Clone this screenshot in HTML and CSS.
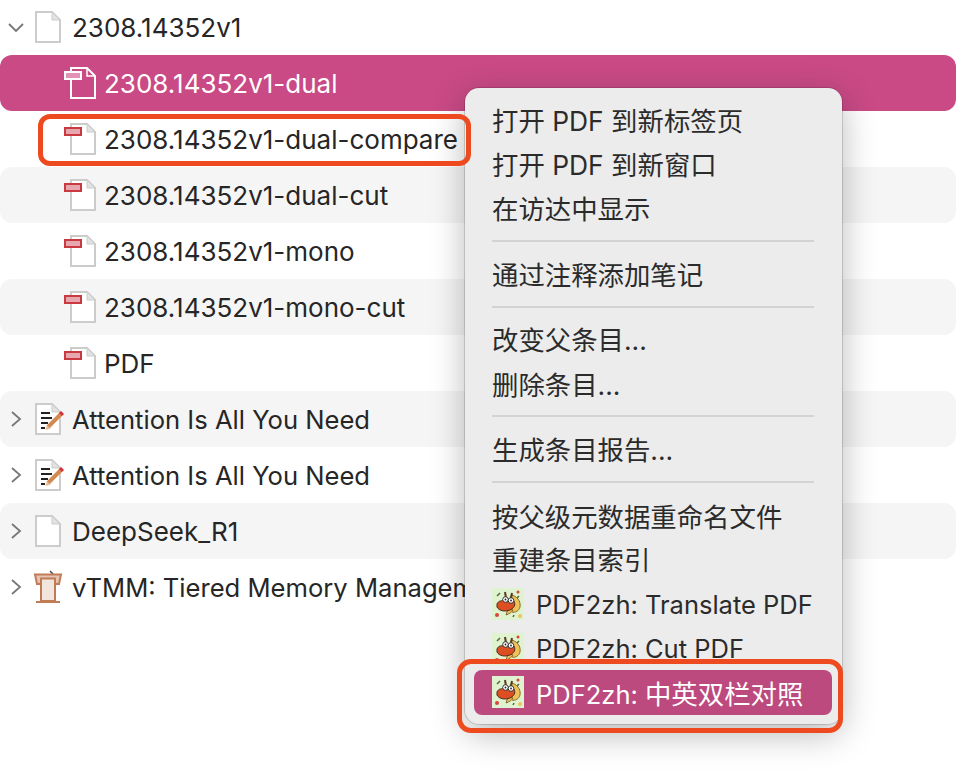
FILE: index.html
```html
<!DOCTYPE html>
<html lang="zh">
<head>
<meta charset="utf-8">
<title>Zotero</title>
<link rel="stylesheet" href="styles.css">
</head>
<body>
<svg class="defs" width="0" height="0">
  <symbol id="doc" viewBox="0 0 26 32">
    <path d="M1 1H17L25 9V31H1Z" fill="#fff" stroke="#ccc" stroke-width="2"/>
    <path d="M17 1V9H25Z" fill="#e2e2e2" stroke="#ccc" stroke-width="1"/>
  </symbol>
  <symbol id="pdf" viewBox="0 0 32 32">
    <path d="M7 1H23L31 9V31H7Z" fill="#fff" stroke="#ccc" stroke-width="2"/>
    <path d="M23 1V9H31Z" fill="#e2e2e2" stroke="#ccc" stroke-width="1"/>
    <rect x="1" y="5" width="16" height="7" fill="#e6a7ae" stroke="#c9393f" stroke-width="2"/>
  </symbol>
  <symbol id="pdf-sel" viewBox="0 0 32 32">
    <path d="M7 1H23L31 9V31H7Z" fill="none" stroke="#fff" stroke-width="2"/>
    <path d="M23 1V9H31" fill="none" stroke="#fff" stroke-width="1.5"/>
    <rect x="1" y="5" width="16" height="7" fill="#e393b8" stroke="#fff" stroke-width="2"/>
  </symbol>
  <symbol id="note" viewBox="0 0 26 32">
    <path d="M1 1H17L25 9V31H1Z" fill="#fff" stroke="#ccc" stroke-width="2"/>
    <path d="M17 1V9H25Z" fill="#e2e2e2" stroke="#ccc" stroke-width="1"/>
    <path d="M6 10H15M6 15H17M6 20H13M6 25H10" stroke="#222" stroke-width="2"/>
    <path d="M13 24L26 11" stroke="#d28a52" stroke-width="4"/>
    <path d="M10.500 27L12 22L15.500 25.500Z" fill="#e8b98f"/>
    <path d="M25 9L28 12" stroke="#d9303a" stroke-width="3"/>
  </symbol>
  <symbol id="podium" viewBox="0 0 26 32">
    <path d="M15 0L18 3" stroke="#444" stroke-width="1.500"/>
    <path d="M0 3.500H26L24 13H2Z" fill="#e4c3b2" stroke="#c17c56" stroke-width="2"/>
    <path d="M6 7.500H20V30H6Z" fill="#f2e5de" stroke="#c17c56" stroke-width="2"/>
    <path d="M1 31H25" stroke="#c17c56" stroke-width="2"/>
  </symbol>
  <symbol id="dragon" viewBox="0 0 32 32">
    <rect width="32" height="32" fill="#dff3d0"/>
    <path d="M19 7C25 8 29 13 28 19C27 23 23 25 20 24Z" fill="#eec25a" stroke="#8a6a2a"/>
    <path d="M14 27C17 26 20 24 21 22L16 21Z" fill="#eec25a" stroke="#8a6a2a"/>
    <path d="M13 4L14 10M20 5L19 10" stroke="#5a3a1a" stroke-width="2"/>
    <path d="M5 16C6 13 10 12 13 13L22 13C24 17 22 20 18 22C13 24 7 23 5 19Z" fill="#dc4f22" stroke="#4c2a1c"/>
    <circle cx="13.500" cy="11.500" r="2.800" fill="#fff" stroke="#333"/>
    <circle cx="19" cy="12.500" r="2.800" fill="#fff" stroke="#333"/>
    <circle cx="13.500" cy="11.500" r=".9" fill="#222"/>
    <circle cx="19" cy="12.500" r=".9" fill="#222"/>
    <circle cx="5" cy="27" r="2" fill="#d9443f"/>
    <circle cx="26" cy="4" r="1.500" fill="#d9443f"/>
    <circle cx="28" cy="28" r="2" fill="#eec25a"/>
    <path d="M5 8L8 5M25 10L27 8M21 29L22 27" stroke="#556b3a" stroke-width="1.500"/>
  </symbol>
  <symbol id="chev-r" viewBox="0 0 12 16">
    <path d="M2 1L10 8L2 15" fill="none" stroke="#777" stroke-width="1.800"/>
  </symbol>
  <symbol id="chev-d" viewBox="0 0 16 12">
    <path d="M1 2L8 9L15 2" fill="none" stroke="#777" stroke-width="1.800"/>
  </symbol>
</svg>

<main class="tree">
  <div class="row">
    <svg class="chev-d"><use href="#chev-d"/></svg>
    <svg class="icon"><use href="#doc"/></svg>
    <span class="label">2308.14352v1</span>
  </div>
  <div class="row child selected">
    <svg class="icon-pdf"><use href="#pdf-sel"/></svg>
    <span class="label">2308.14352v1-dual</span>
  </div>
  <div class="row child">
    <svg class="icon-pdf"><use href="#pdf"/></svg>
    <span class="label">2308.14352v1-dual-compare</span>
  </div>
  <div class="row child stripe">
    <svg class="icon-pdf"><use href="#pdf"/></svg>
    <span class="label">2308.14352v1-dual-cut</span>
  </div>
  <div class="row child">
    <svg class="icon-pdf"><use href="#pdf"/></svg>
    <span class="label">2308.14352v1-mono</span>
  </div>
  <div class="row child stripe">
    <svg class="icon-pdf"><use href="#pdf"/></svg>
    <span class="label">2308.14352v1-mono-cut</span>
  </div>
  <div class="row child">
    <svg class="icon-pdf"><use href="#pdf"/></svg>
    <span class="label">PDF</span>
  </div>
  <div class="row stripe prose">
    <svg class="chev-r"><use href="#chev-r"/></svg>
    <svg class="icon"><use href="#note"/></svg>
    <span class="label">Attention Is All You Need</span>
  </div>
  <div class="row prose">
    <svg class="chev-r"><use href="#chev-r"/></svg>
    <svg class="icon"><use href="#note"/></svg>
    <span class="label">Attention Is All You Need</span>
  </div>
  <div class="row stripe">
    <svg class="chev-r"><use href="#chev-r"/></svg>
    <svg class="icon"><use href="#doc"/></svg>
    <span class="label">DeepSeek_R1</span>
  </div>
  <div class="row prose">
    <svg class="chev-r"><use href="#chev-r"/></svg>
    <svg class="icon"><use href="#podium"/></svg>
    <span class="label">vTMM: Tiered Memory Management</span>
  </div>
</main>

<nav class="menu">
  <div class="item">打开 PDF 到新标签页</div>
  <div class="item">打开 PDF 到新窗口</div>
  <div class="item">在访达中显示</div>
  <hr class="sep">
  <div class="item">通过注释添加笔记</div>
  <hr class="sep">
  <div class="item">改变父条目...</div>
  <div class="item">删除条目...</div>
  <hr class="sep">
  <div class="item">生成条目报告...</div>
  <hr class="sep">
  <div class="item low">按父级元数据重命名文件</div>
  <div class="item">重建条目索引</div>
  <div class="item plugin low"><svg class="dragon"><use href="#dragon"/></svg>PDF2zh: Translate PDF</div>
  <div class="item plugin low"><svg class="dragon"><use href="#dragon"/></svg>PDF2zh: Cut PDF</div>
  <div class="item plugin active"><svg class="dragon"><use href="#dragon"/></svg><span>PDF2zh: <span class="cjk">中英双栏对照</span></span></div>
</nav>

<div class="callout callout-row"></div>
<div class="callout callout-menu"></div>
</body>
</html>
```

FILE: styles.css
```css
* { box-sizing: border-box; }

html, body {
  margin: 0;
  height: 100%;
  background: #fff;
  overflow: hidden;
}

body {
  position: relative;
  font-family: Inter, "Noto Sans CJK SC", sans-serif;
  color: #262626;
}

.defs { position: absolute; }

symbol { overflow: visible; }

.tree {
  display: flex;
  flex-direction: column;
  margin-top: -1px;
}

.row {
  display: flex;
  align-items: center;
  height: 56px;
  padding-left: 35px;
  border-radius: 12px;
  font-size: 26px;
  white-space: nowrap;
  position: relative;
}

.row.prose { font-size: 25.600px; }
.row.child { padding-left: 64px; }
.row.stripe { background: #f5f5f5; }
.row.selected { background: #c94a85; color: #fff; }

.label { margin-left: 11px; }
.child .label { margin-left: 8px; }

.icon { width: 26px; height: 32px; overflow: visible; flex: none; }
.icon-pdf { width: 32px; height: 32px; flex: none; }

.chev-r, .chev-d { position: absolute; }
.chev-r { left: 10px; top: 20px; width: 12px; height: 16px; }
.chev-d { left: 8px; top: 23px; width: 16px; height: 12px; }

.menu {
  position: absolute;
  left: 465px;
  top: 88px;
  width: 377px;
  height: 636px;
  padding: 10px 10px 10px 9px;
  background: #ececec;
  border-radius: 14px;
  box-shadow: 0 0 0 1px rgba(0, 0, 0, .14), 0 10px 34px rgba(0, 0, 0, .28);
  font-size: 26.400px;
  font-family: Inter, "Noto Sans CJK SC", sans-serif;
}

.item {
  display: flex;
  align-items: center;
  height: 44.400px;
  padding-left: 18px;
  padding-bottom: 2px;
  border-radius: 8px;
  white-space: nowrap;
  color: #2b2b2b;
}

.item.low { padding-bottom: 0; padding-top: 1px; }

.plugin { font-size: 25.500px; }
.cjk { font-size: 26.400px; }
.item.active { background: #bd4a7e; color: #fff; padding-bottom: 0; }

.dragon { width: 32px; height: 32px; margin-right: 12px; flex: none; }

.sep {
  height: 2px;
  margin: 9px 18px 10px;
  border: 0;
  background: #d3d3d3;
}

.callout {
  position: absolute;
  border: 5px solid #ee4a1f;
  pointer-events: none;
}

.callout-row { left: 38px; top: 114px; width: 433px; height: 52px; border-radius: 12px; }
.callout-menu { left: 457px; top: 659px; width: 386px; height: 74px; border-radius: 14px; }
```
